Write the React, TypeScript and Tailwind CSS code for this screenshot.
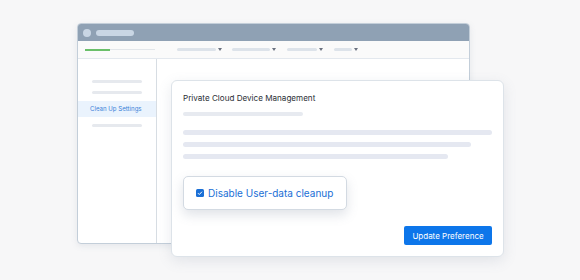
import React from 'react';

const navItems = [
  { w: 'w-[39px]', ml: 'ml-[22px]' },
  { w: 'w-[38px]', ml: 'ml-[10px]' },
  { w: 'w-[30px]', ml: 'ml-[11px]' },
  { w: 'w-[18px]', ml: 'ml-[11px]' },
];

const Caret = () => (
  <svg width="4" height="3" viewBox="0 0 4 3" className="ml-[2px]">
    <path d="M0 0h4L2 3z" fill="#6b7280" />
  </svg>
);

export default function App() {
  return (
    <div
      className="relative w-[580px] h-[280px] bg-[#f7f7f8] pl-[77px] pt-[23px]"
      style={{ fontFamily: 'Inter, "Noto Sans", sans-serif' }}
    >
      {/* Browser window */}
      <div className="w-[393px] h-[221px] rounded-[4px] border border-[#c3ced9] bg-white overflow-hidden flex flex-col shadow-[0_2px_6px_rgba(100,116,139,0.12)]">
        <div className="h-[17px] bg-[#8fa1b4] flex items-center pl-[5px] gap-[5px] shrink-0">
          <div className="w-[8px] h-[8px] rounded-full bg-[#c9d6e4]" />
          <div className="w-[38px] h-[6px] rounded-full bg-[#c9d6e4]" />
        </div>
        <div className="h-[18px] bg-[#fafafa] border-b border-[#e3e8ee] flex items-center pl-[7px] shrink-0">
          <div className="flex items-center">
            <div className="w-[25px] h-[2px] bg-[#6abf69]" />
            <div className="w-[45px] h-[1px] bg-[#e2e6ea]" />
          </div>
          {navItems.map((n, i) => (
            <div key={i} className={`flex items-center ${n.ml}`}>
              <div className={`${n.w} h-[3px] rounded-full bg-[#dde3ea]`} />
              <Caret />
            </div>
          ))}
        </div>
        <div className="flex flex-1">
          <div className="w-[79px] border-r border-[#d7dde3] flex flex-col pt-[21px]">
            <div className="mx-[14px] h-[3px] rounded-full bg-[#e6e9ee]" />
            <div className="mx-[14px] mt-[8px] h-[3px] rounded-full bg-[#e6e9ee]" />
            <div className="mt-[7px] h-[16px] bg-[#eaf3fd] flex items-center pl-[12px] text-[6.1px] text-[#3a82d8] whitespace-nowrap">
              Clean Up Settings
            </div>
            <div className="mx-[14px] mt-[7px] h-[3px] rounded-full bg-[#e6e9ee]" />
          </div>
          <div className="flex-1" />
        </div>
      </div>

      {/* Dialog */}
      <div className="absolute left-[171px] top-[80px] w-[333px] h-[177px] rounded-[6px] bg-white border border-[#dde3e9] shadow-[0_4px_14px_rgba(100,116,139,0.14)] flex flex-col pl-[11px] pr-[11px] pt-[11px]">
        <div className="text-[8.1px] leading-[12px] text-[#2b2f36] whitespace-nowrap">Private Cloud Device Management</div>
        <div className="mt-[8px] w-[120px] h-[4px] rounded-full bg-[#e7eaf0]" />
        <div className="mt-[14px] w-[309px] h-[5px] rounded-full bg-[#e5e8f1]" />
        <div className="mt-[7px] w-[288px] h-[5px] rounded-full bg-[#e5e8f1]" />
        <div className="mt-[7px] w-[265px] h-[5px] rounded-full bg-[#e5e8f1]" />
        <div className="mt-[17px] w-[164px] h-[34px] rounded-[5px] border border-[#d3dae2] bg-white shadow-[0_5px_12px_rgba(100,116,139,0.2)] flex items-center pl-[12px] gap-[4px]">
          <div className="w-[8px] h-[8px] rounded-[1.5px] bg-[#1a6fd6] flex items-center justify-center">
            <svg width="6" height="6" viewBox="0 0 6 6">
              <path d="M1 3.2l1.3 1.3L5 1.7" stroke="white" strokeWidth="1" fill="none" />
            </svg>
          </div>
          <span className="text-[10px] text-[#1a6fd6] whitespace-nowrap">Disable User-data cleanup</span>
        </div>
        <div className="flex justify-end mt-[16px]">
          <div className="w-[88px] h-[19px] rounded-[2px] bg-[#0d76ea] text-white text-[8px] flex items-center justify-center whitespace-nowrap">
            Update Preference
          </div>
        </div>
      </div>
    </div>
  );
}
